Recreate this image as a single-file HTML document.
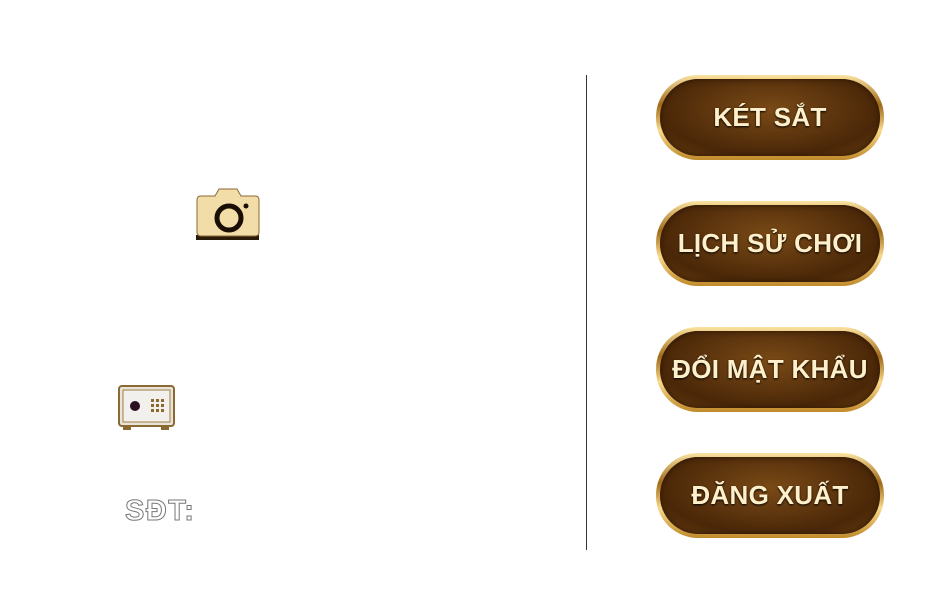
<!DOCTYPE html><html><head><meta charset="utf-8"><style>
body{margin:0;width:929px;height:595px;background:#fff;position:relative;overflow:hidden;font-family:"Liberation Sans",sans-serif}
.div{position:absolute;left:586px;top:75px;width:1px;height:475px;background:#333}
.btn{position:absolute;left:656px;width:228px;height:85px;border-radius:42px;box-sizing:border-box;
background:linear-gradient(#fbe3a0,#a06a1a 35%,#f9d88a 65%,#c08a2a);padding:4px}
.btn div{width:100%;height:100%;border-radius:40px;background:radial-gradient(ellipse at 50% 40%,#7a4a16,#4a2708 70%,#6b3f10);
display:flex;align-items:center;justify-content:center;color:#fff0cc;font-weight:bold;font-size:26px;letter-spacing:0.3px;text-shadow:0 1px 2px #000;box-shadow:inset 0 0 6px #2a1504}
.sdt{position:absolute;left:125px;top:495px;font-size:29px;font-weight:bold;letter-spacing:1.5px;color:#fff;-webkit-text-stroke:1px #777}
</style></head><body>
<div class="div"></div>
<div class="btn" style="top:75px"><div>KÉT SẮT</div></div>
<div class="btn" style="top:201px"><div>LỊCH SỬ CHƠI</div></div>
<div class="btn" style="top:327px"><div>ĐỔI MẬT KHẨU</div></div>
<div class="btn" style="top:453px"><div>ĐĂNG XUẤT</div></div>
<svg style="position:absolute;left:195px;top:188px" width="66" height="54">
<rect x="1" y="47" width="63" height="5" fill="#2a1a08"/>
<path d="M20 8 L24 1 H42 L46 8 H60 Q64 8 64 12 V44 Q64 48 60 48 H6 Q2 48 2 44 V12 Q2 8 6 8 Z" fill="#f2dca8" stroke="#8a6a3a"/>
<circle cx="34" cy="30" r="12" fill="none" stroke="#1a0e04" stroke-width="5"/>
<circle cx="51" cy="18" r="2.5" fill="#1a0e04"/>
</svg>
<svg style="position:absolute;left:118px;top:385px" width="57" height="46">
<rect x="1" y="1" width="55" height="40" rx="3" fill="#e8e4dc" stroke="#8a6a30" stroke-width="2"/>
<rect x="5" y="5" width="47" height="32" fill="#f2f0ec" stroke="#a08040"/>
<circle cx="17" cy="21" r="5" fill="#2a1020"/>
<g fill="#8a6a30"><rect x="33" y="14" width="3" height="3"/><rect x="38" y="14" width="3" height="3"/><rect x="43" y="14" width="3" height="3"/><rect x="33" y="19" width="3" height="3"/><rect x="38" y="19" width="3" height="3"/><rect x="43" y="19" width="3" height="3"/><rect x="33" y="24" width="3" height="3"/><rect x="38" y="24" width="3" height="3"/><rect x="43" y="24" width="3" height="3"/>
<rect x="5" y="41" width="8" height="4"/><rect x="43" y="41" width="8" height="4"/></g>
</svg>
<div class="sdt">SĐT:</div>
</body></html>
